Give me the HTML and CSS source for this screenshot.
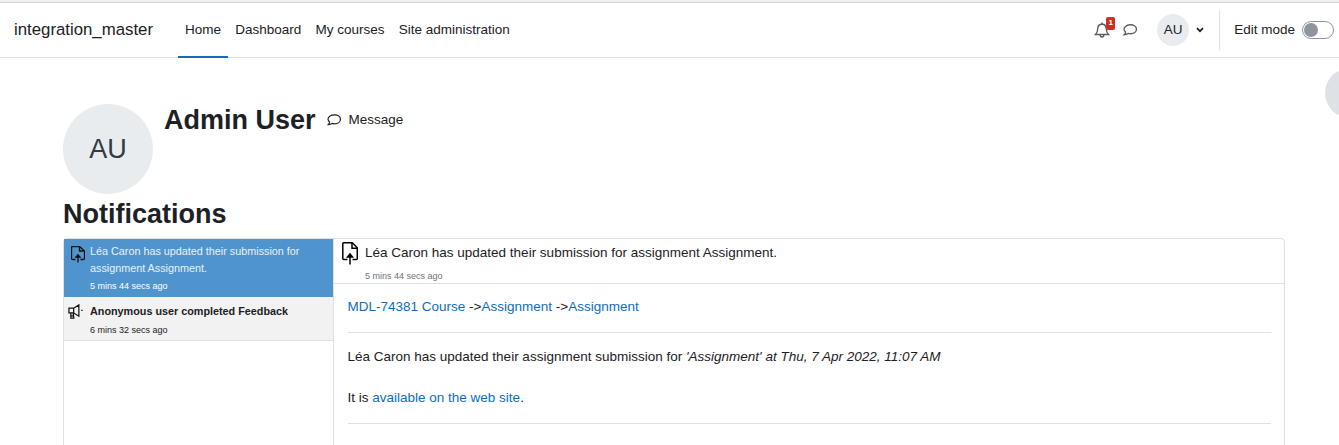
FILE: index.html
```html
<!DOCTYPE html>
<html lang="en">
<head>
    <meta charset="UTF-8">
    <meta name="viewport" content="width=device-width, initial-scale=1.0">
    <title>Notifications</title>
    <link rel="stylesheet" href="styles.css">
</head>
<body>
    <!-- top navigation -->
    <nav class="navbar">
        <a class="brand" href="#">integration_master</a>
        <ul class="primary-nav">
            <li class="active"><a href="#">Home</a></li>
            <li><a href="#">Dashboard</a></li>
            <li><a href="#">My courses</a></li>
            <li><a href="#">Site administration</a></li>
        </ul>
        <div class="nav-right">
            <a class="nav-icon bell" href="#">
                <svg width="16" height="16" viewBox="0 0 16 16" fill="none" stroke="#5c5f62" stroke-width="1.400"><path d="M1.500 12.500c1.400-1.300 2.100-2.500 2.200-5.500.1-2.800 1.900-4.700 4.300-4.700s4.200 1.900 4.300 4.700c.1 3 .8 4.200 2.200 5.500z"/><path d="M6.200 13c0 1.100.8 2 1.800 2s1.800-.9 1.800-2"/><path d="M8 .6v1.800"/></svg>
                <span class="badge">1</span>
            </a>
            <a class="nav-icon chat" href="#">
                <svg width="16" height="16" viewBox="0 0 16 16" fill="none" stroke="#5c5f62" stroke-width="1.400"><path d="M8.500 2.800c3.300 0 6 1.900 6 4.500s-2.700 4.500-6 4.500c-.9 0-1.700-.1-2.400-.4-.9.800-2.200 1.300-3.900 1.300.8-.8 1.300-1.700 1.400-2.700C2.700 9.200 2 8.300 2 7.300c0-2.600 3.200-4.500 6.500-4.500z"/></svg>
            </a>
            <div class="user-menu">
                <span class="avatar-small">AU</span>
                <svg class="caret" width="8" height="6" viewBox="0 0 8 6" fill="none" stroke="#1d2125" stroke-width="1.800"><path d="M1 1.200l3 3 3-3"/></svg>
            </div>
            <div class="edit-mode">
                <span>Edit mode</span>
                <span class="switch"><span class="knob"></span></span>
            </div>
        </div>
    </nav>

    <span class="drawer-toggle"></span>

    <main class="page">
        <header class="profile-head">
            <span class="avatar-large">AU</span>
            <div class="profile-name">
                <h2>Admin User</h2>
                <a class="message-link" href="#">
                    <svg width="16" height="16" viewBox="0 0 16 16" fill="none" stroke="#1d2125" stroke-width="1.200"><path d="M8.500 2.800c3.300 0 6 1.900 6 4.500s-2.700 4.500-6 4.500c-.9 0-1.700-.1-2.400-.4-.9.800-2.200 1.300-3.900 1.300.8-.8 1.300-1.700 1.400-2.700C2.700 9.200 2 8.300 2 7.300c0-2.600 3.200-4.500 6.500-4.500z"/></svg>
                    Message
                </a>
            </div>
        </header>

        <h1 class="page-title">Notifications</h1>

        <section class="popup-page">
            <!-- list on the left -->
            <div class="notif-list">
                <div class="notif-item selected">
                    <span class="icon-box">
                        <svg width="14" height="17" viewBox="0 0 14 17" fill="none" stroke="#111" stroke-width="1.300"><path d="M4.500 13.500H1.500a1 1 0 0 1-1-1V1.500a1 1 0 0 1 1-1h7l5 4.500v7.500a1 1 0 0 1-1 1H9.500"/><path d="M8.500.5V5h5"/><path d="M7 16.500V9M5 11l2-2.200L9 11z" fill="#111"/></svg>
                    </span>
                    <div>
                        <p class="item-text">Léa Caron has updated their submission for assignment Assignment.</p>
                        <p class="item-time">5 mins 44 secs ago</p>
                    </div>
                </div>
                <div class="notif-item unread">
                    <span class="icon-box">
                        <svg width="18" height="18" viewBox="0 0 18 18" fill="none" stroke="#111" stroke-width="1.300"><path d="M1 5h5v5H1zM6 5l5.500-3.500v12L6 10zM14 7.300h1.500M3 10v5.500h3.200L5.500 10M3 13h3"/></svg>
                    </span>
                    <div>
                        <p class="item-text">Anonymous user completed Feedback</p>
                        <p class="item-time">6 mins 32 secs ago</p>
                    </div>
                </div>
            </div>

            <!-- content on the right -->
            <div class="notif-detail">
                <div class="detail-head">
                    <div class="detail-title">
                        <svg width="16" height="23" viewBox="0 0 16 23" fill="none" stroke="#000" stroke-width="1.500"><path d="M5.500 17.500H1.800a1 1 0 0 1-1-1V1.800a1 1 0 0 1 1-1h8.500l5 5v10.700a1 1 0 0 1-1 1h-3.800"/><path d="M10 .8v5.500h5.300"/><path d="M8 22.500V12M5.500 15L8 12l2.500 3z" fill="#000"/></svg>
                        <span>Léa Caron has updated their submission for assignment Assignment.</span>
                    </div>
                    <p class="detail-time">5 mins 44 secs ago</p>
                </div>
                <div class="detail-body">
                    <p class="crumbs"><a href="#">MDL-74381 Course</a> -&gt;<a href="#">Assignment</a> -&gt;<a href="#">Assignment</a></p>
                    <hr>
                    <p>Léa Caron has updated their assignment submission for <em>'Assignment' at Thu, 7 Apr 2022, 11:07 AM</em></p>
                    <p class="web-line">It is <a href="#">available on the web site</a>.</p>
                    <hr>
                </div>
            </div>
        </section>
    </main>
</body>
</html>
```

FILE: styles.css
```css
html, body {
    height: 445px;
    overflow: hidden;
}

body {
    margin: 0;
    font-family: "Liberation Sans", Arial, sans-serif;
    font-size: 13.5px;
    line-height: 20px;
    color: #1d2125;
    background: #fff;
    border-top: 2px solid #f0f0f0;
}

a {
    color: #0f6cbf;
    text-decoration: none;
}

p {
    margin: 0;
}

/* navbar */
.navbar {
    display: flex;
    align-items: stretch;
    height: 54px;
    padding-left: 14px;
    border-top: 1px solid #d4d4d4;
    border-bottom: 1px solid #dee2e6;
}

.brand {
    align-self: center;
    margin-right: 25px;
    font-size: 16.8px;
    color: #1d2125;
}

.primary-nav {
    display: flex;
    margin: 0;
    padding: 0;
    list-style: none;
}

.primary-nav li {
    display: flex;
    align-items: center;
    padding: 0 7.100px;
    border-bottom: 2px solid transparent;
    margin-bottom: -1px;
}

.primary-nav li.active {
    border-bottom-color: #0f6cbf;
}

.primary-nav a {
    color: #1d2125;
}

.nav-right {
    display: flex;
    align-items: center;
    margin-left: auto;
}

.nav-icon {
    position: relative;
    display: flex;
}

.bell {
    margin-right: 12px;
}

.badge {
    position: absolute;
    top: -5px;
    right: -5px;
    width: 9px;
    height: 13px;
    border-radius: 2px;
    background: #ca3120;
    color: #fff;
    font-size: 8px;
    font-weight: 700;
    line-height: 12px;
    text-align: center;
}

.user-menu {
    display: flex;
    align-items: center;
    gap: 7px;
    margin-left: 19px;
    padding-right: 15px;
}

.avatar-small {
    display: flex;
    align-items: center;
    justify-content: center;
    width: 32px;
    height: 32px;
    border-radius: 50%;
    background: #e9ecef;
}

.edit-mode {
    display: flex;
    align-items: center;
    gap: 7px;
    height: 40px;
    padding: 0 5px 0 14px;
    border-left: 1px solid #dee2e6;
}

.switch {
    display: block;
    width: 30px;
    height: 16px;
    border: 1px solid #8f959e;
    border-radius: 9px;
    background: #fff;
}

.knob {
    display: block;
    width: 14px;
    height: 14px;
    margin: 1px;
    border-radius: 50%;
    background: #8f959e;
}

/* round drawer button, half off the window */
.drawer-toggle {
    position: absolute;
    top: 68px;
    left: 1325px;
    width: 50px;
    height: 50px;
    border-radius: 50%;
    background: #dee2e6;
}

/* page */
.page {
    padding: 46px 54px 0 63px;
}

.profile-head {
    display: flex;
    gap: 11px;
}

.avatar-large {
    display: flex;
    align-items: center;
    justify-content: center;
    width: 90px;
    height: 90px;
    border-radius: 50%;
    background: #e9ecef;
    color: #343a40;
    font-size: 27px;
}

.profile-name {
    display: flex;
    align-items: center;
    gap: 10px;
    height: 32px;
}

.profile-name h2 {
    margin: 0;
    font-size: 27px;
    font-weight: 700;
    line-height: 32px;
}

.message-link {
    display: flex;
    align-items: center;
    gap: 7px;
    color: #1d2125;
}

.page-title {
    margin: 4px 0 8px;
    font-size: 27px;
    font-weight: 700;
    line-height: 32px;
}

/* notifications */
.popup-page {
    display: flex;
    height: 300px;
    border: 1px solid #dee2e6;
    border-radius: 4px;
}

.notif-list {
    flex: none;
    width: 269px;
    border-right: 1px solid #dee2e6;
}

.notif-item {
    display: flex;
    padding: 4px 10px 3px 4px;
    font-size: 10.8px;
    line-height: 17px;
}

.icon-box {
    flex: none;
    display: flex;
    justify-content: flex-end;
    width: 17px;
    margin-right: 5px;
    padding-top: 3px;
}

.item-time {
    font-size: 9px;
    line-height: 16px;
    margin-top: 1px;
}

.notif-item.selected {
    background: #4f94cd;
    color: #fff;
}

.notif-item.selected .item-text {
    color: #e8f0f8;
}

.notif-item.unread {
    padding-top: 6px;
    padding-bottom: 2px;
    background: #f2f2f2;
    border-bottom: 1px solid #dee2e6;
    font-weight: 700;
}

.notif-item.unread .icon-box {
    padding-top: 0;
}

.notif-item.unread .item-time {
    margin-top: 2px;
    font-weight: 400;
}

.notif-detail {
    flex: 1;
    min-width: 0;
}

.detail-head {
    height: 41px;
    padding: 3px 8px 0 8px;
    border-bottom: 1px solid #dee2e6;
}

.detail-title {
    display: flex;
    align-items: flex-start;
    gap: 7px;
    height: 22px;
}

.detail-title span {
    margin-top: 1px;
}

.detail-time {
    margin: 4px 0 0 23px;
    font-size: 9px;
    line-height: 16px;
    color: #6a737b;
}

.detail-body {
    padding: 13px 13px 0 13.500px;
}

.crumbs {
    margin-bottom: 15px;
}

.detail-body hr {
    margin: 0 0 14px;
    border: 0;
    border-top: 1px solid #dee2e6;
}

.web-line {
    margin-top: 21px;
    margin-bottom: 15px;
}
```
